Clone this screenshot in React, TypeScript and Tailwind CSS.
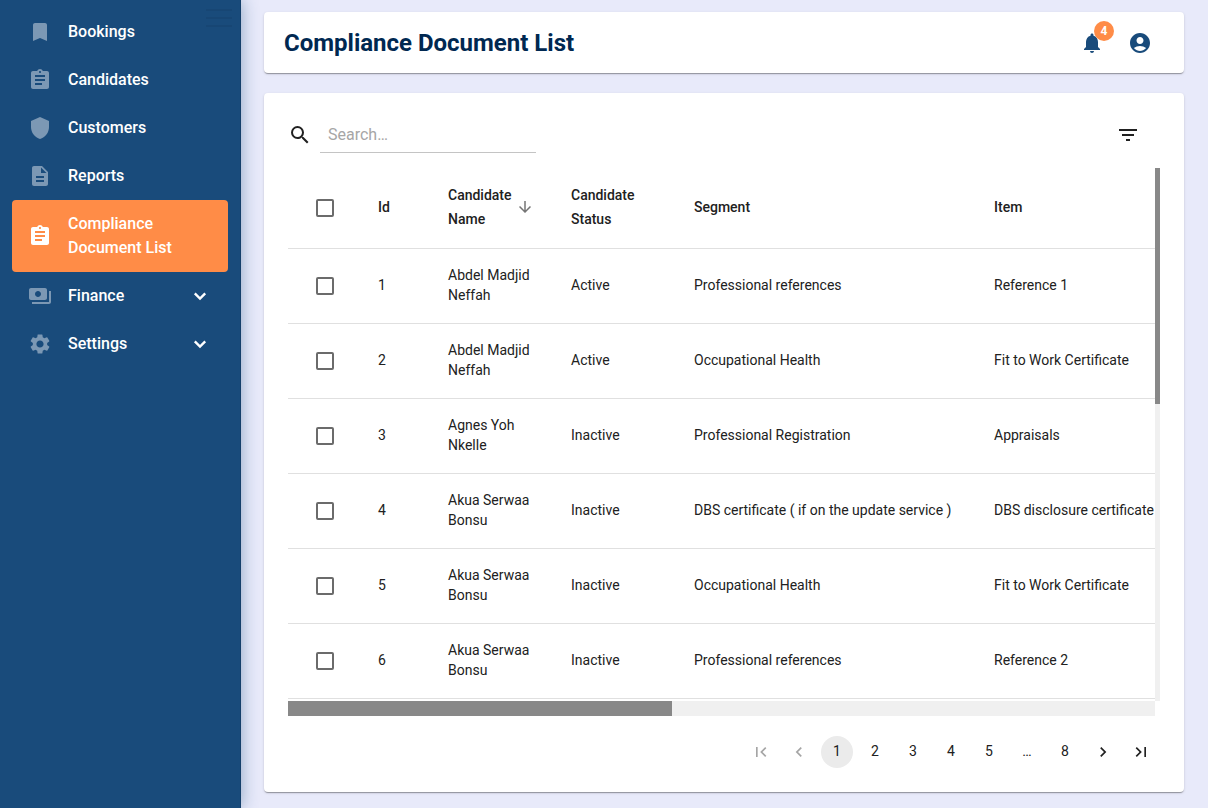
import React from 'react';
import {
  MdAccountCircle,
  MdArrowDownward,
  MdAssignment,
  MdBookmark,
  MdChevronLeft,
  MdChevronRight,
  MdDescription,
  MdFilterList,
  MdFirstPage,
  MdLastPage,
  MdNotifications,
  MdPayments,
  MdSearch,
  MdSettings,
  MdShield,
} from 'react-icons/md';
import type { IconType } from 'react-icons';

type NavItem = { label: string; icon: IconType; active?: boolean; expandable?: boolean };

const navItems: NavItem[] = [
  { label: 'Bookings', icon: MdBookmark },
  { label: 'Candidates', icon: MdAssignment },
  { label: 'Customers', icon: MdShield },
  { label: 'Reports', icon: MdDescription },
  { label: 'Compliance Document List', icon: MdAssignment, active: true },
  { label: 'Finance', icon: MdPayments, expandable: true },
  { label: 'Settings', icon: MdSettings, expandable: true },
];

const rows = [
  { id: 1, name: 'Abdel Madjid Neffah', status: 'Active', segment: 'Professional references', item: 'Reference 1' },
  { id: 2, name: 'Abdel Madjid Neffah', status: 'Active', segment: 'Occupational Health', item: 'Fit to Work Certificate' },
  { id: 3, name: 'Agnes Yoh Nkelle', status: 'Inactive', segment: 'Professional Registration', item: 'Appraisals' },
  { id: 4, name: 'Akua Serwaa Bonsu', status: 'Inactive', segment: 'DBS certificate ( if on the update service )', item: 'DBS disclosure certificate' },
  { id: 5, name: 'Akua Serwaa Bonsu', status: 'Inactive', segment: 'Occupational Health', item: 'Fit to Work Certificate' },
  { id: 6, name: 'Akua Serwaa Bonsu', status: 'Inactive', segment: 'Professional references', item: 'Reference 2' },
];

const cardClass =
  'rounded bg-white shadow-[0_2px_1px_-1px_rgba(0,0,0,0.2),0_1px_1px_0_rgba(0,0,0,0.14),0_1px_3px_0_rgba(0,0,0,0.12)]';

function ExpandIcon() {
  return (
    <svg viewBox="0 0 24 24" className="size-6 shrink-0" fill="none" stroke="currentColor" strokeWidth="2.4" aria-hidden="true">
      <path d="M6.8 9.4 12 14.6 17.2 9.4" />
    </svg>
  );
}

function Sidebar() {
  return (
    <aside className="relative z-10 w-[241px] shrink-0 border-r border-[#143f6a] bg-[#194b7b] shadow-[0_0_16px_0_rgba(25,75,123,0.45)]">
      <button type="button" aria-label="Toggle menu" className="absolute top-[9px] right-2 flex w-[26px] flex-col gap-1.5">
        <span className="h-0.5 bg-[#174674]" />
        <span className="h-0.5 bg-[#174674]" />
        <span className="h-0.5 bg-[#174674]" />
      </button>
      <nav className="flex flex-col px-3 py-2">
        {navItems.map(({ label, icon: Icon, active, expandable }) => (
          <a
            key={label}
            href="#"
            className={
              active
                ? 'flex items-center gap-4 rounded bg-[#ff8c47] px-4 py-3 text-base font-medium text-white'
                : 'flex items-center gap-4 rounded px-4 py-3 text-base font-medium text-white'
            }
          >
            <Icon size={24} className={active ? 'shrink-0' : 'shrink-0 text-[#7c98b4]'} />
            <span className="flex-1">{label}</span>
            {expandable && <ExpandIcon />}
          </a>
        ))}
      </nav>
    </aside>
  );
}

function Checkbox({ label }: { label: string }) {
  return (
    <input
      type="checkbox"
      aria-label={label}
      className="mx-auto block size-[18px] appearance-none rounded-xs border-2 border-[#6b6b6b] bg-white checked:bg-[#194b7b]"
    />
  );
}

function IconPageButton({ label, icon: Icon, disabled }: { label: string; icon: IconType; disabled?: boolean }) {
  return (
    <button
      type="button"
      aria-label={label}
      disabled={disabled}
      className="flex size-8 items-center justify-center rounded-full disabled:opacity-40"
    >
      <Icon size={20} />
    </button>
  );
}

function PageButton({ page, active }: { page: number; active?: boolean }) {
  return (
    <button
      type="button"
      aria-current={active ? 'page' : undefined}
      className={
        active
          ? 'flex size-8 items-center justify-center rounded-full bg-[#ebebeb] pb-0.5'
          : 'flex size-8 items-center justify-center rounded-full pb-0.5'
      }
    >
      {page}
    </button>
  );
}

function DocumentTable() {
  return (
    <div className="grid grid-cols-[minmax(0,1fr)_5px]">
      <div className="overflow-hidden pb-0.5">
        <table className="w-[990px] table-fixed border-separate border-spacing-0 text-left text-sm">
          <colgroup>
            <col className="w-[74px]" />
            <col className="w-[70px]" />
            <col className="w-[123px]" />
            <col className="w-[123px]" />
            <col className="w-[300px]" />
            <col className="w-[300px]" />
          </colgroup>
          <thead>
            <tr className="h-[81px] leading-6 *:border-b *:border-[#e0e0e0] *:px-4 *:font-medium *:not-first:pb-0.5">
              <th scope="col">
                <Checkbox label="Select all" />
              </th>
              <th scope="col">Id</th>
              <th scope="col" aria-sort="descending">
                <button type="button" className="flex items-center gap-1 text-left">
                  <span>
                    Candidate
                    <br />
                    Name
                  </span>
                  <MdArrowDownward size={18} className="shrink-0 text-[#757575]" />
                </button>
              </th>
              <th scope="col">Candidate Status</th>
              <th scope="col">Segment</th>
              <th scope="col">Item</th>
            </tr>
          </thead>
          <tbody>
            {rows.map((row) => (
              <tr key={row.id} className="h-[75px] leading-5 *:border-b *:border-[#e0e0e0] *:px-4 *:not-first:pb-0.5">
                <td>
                  <Checkbox label={`Select row ${row.id}`} />
                </td>
                <td>{row.id}</td>
                <td>{row.name}</td>
                <td>{row.status}</td>
                <td>{row.segment}</td>
                <td>{row.item}</td>
              </tr>
            ))}
          </tbody>
        </table>
      </div>
      <div className="bg-[#f0f0f0]">
        <div className="h-[44.3%] bg-[#888888]" />
      </div>
      <div className="h-[15px] bg-[#f0f0f0]">
        <div className="h-full w-[44.3%] bg-[#888888]" />
      </div>
    </div>
  );
}

export default function App() {
  return (
    <div className="flex min-h-screen bg-[#e8eafa] font-['Roboto',sans-serif] text-[#212121]">
      <Sidebar />
      <main className="flex min-w-0 flex-1 flex-col gap-5 pt-3 pr-6 pb-4 pl-[23px]">
        <header className={`${cardClass} flex min-h-[61px] items-center pr-8 pl-5`}>
          <h1 className="flex-1 text-2xl font-bold text-[#002851]">Compliance Document List</h1>
          <div className="flex items-center gap-6 text-[#194b7b]">
            <button type="button" aria-label="Notifications" className="relative">
              <MdNotifications size={24} />
              <span className="absolute -top-[10px] -right-[10px] flex size-5 items-center justify-center rounded-full bg-[#ff8c47] text-xs font-bold text-white">
                4
              </span>
            </button>
            <button type="button" aria-label="Account">
              <MdAccountCircle size={24} />
            </button>
          </div>
        </header>

        <section className={`${cardClass} p-6`}>
          <div className="mb-[15px] flex h-9 items-center">
            <label htmlFor="search" className="mr-2">
              <MdSearch size={24} aria-label="Search" />
            </label>
            <input
              id="search"
              type="text"
              placeholder="Search…"
              className="h-full w-[216px] border-b border-[#c4c4c4] bg-transparent px-2 text-base outline-none placeholder:text-[#a6a6a6]"
            />
            <button type="button" aria-label="Filter" className="mr-5 ml-auto">
              <MdFilterList size={24} />
            </button>
          </div>

          <DocumentTable />

          <nav aria-label="Pagination" className="mt-5 mr-[3px] flex justify-end gap-1.5 text-sm">
            <IconPageButton label="First page" icon={MdFirstPage} disabled />
            <IconPageButton label="Previous page" icon={MdChevronLeft} disabled />
            <PageButton page={1} active />
            <PageButton page={2} />
            <PageButton page={3} />
            <PageButton page={4} />
            <PageButton page={5} />
            <span className="flex size-8 items-center justify-center pb-0.5">…</span>
            <PageButton page={8} />
            <IconPageButton label="Next page" icon={MdChevronRight} />
            <IconPageButton label="Last page" icon={MdLastPage} />
          </nav>
        </section>
      </main>
    </div>
  );
}
